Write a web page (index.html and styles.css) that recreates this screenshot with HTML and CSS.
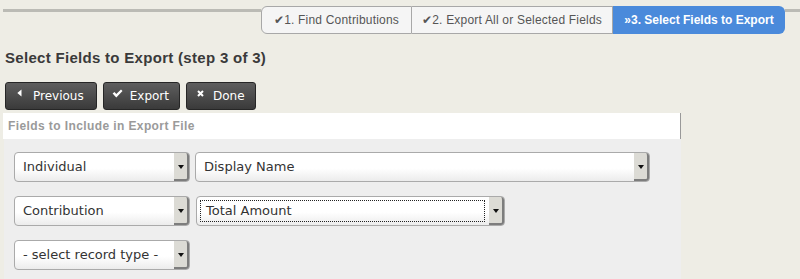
FILE: index.html
```html
<!DOCTYPE html>
<html>
<head>
<meta charset="utf-8">
<link rel="stylesheet" href="styles.css">
</head>
<body>
<div class="wizard">
  <div class="rule"></div>
  <ul class="steps">
    <li class="step step-first">✔1. Find Contributions</li>
    <li class="step step-mid">✔2. Export All or Selected Fields</li>
    <li class="step step-current">»3. Select Fields to Export</li>
  </ul>
  <div class="rule rule-end"></div>
</div>

<h3 class="title">Select Fields to Export (step 3 of 3)</h3>

<div class="buttons">
  <button class="btn btn-prev"><svg class="ico" width="5" height="8" viewBox="0 0 5 8"><path d="M4.5 0.5 L4.5 7.5 L0.3 4 Z" fill="#fff"/></svg>Previous</button>
  <button class="btn btn-export"><svg class="ico" width="11" height="9" viewBox="0 0 11 9"><path d="M0.6 4.6 L2.5 3 L4.3 5 L9 0.5 L10.5 2 L4.3 8.4 Z" fill="#fff"/></svg>Export</button>
  <button class="btn btn-done"><svg class="ico" width="7" height="7" viewBox="0 0 7 7"><path d="M1 1 L6 6 M6 1 L1 6" stroke="#fff" stroke-width="2"/></svg>Done</button>
</div>

<div class="fields">
  <div class="fields-head">Fields to Include in Export File</div>
  <div class="fields-body">
    <div class="row">
      <div class="sel w-type"><span class="sel-text">Individual</span><span class="sel-arrow"></span></div>
      <div class="sel w-name"><span class="sel-text">Display Name</span><span class="sel-arrow"></span></div>
    </div>
    <div class="row">
      <div class="sel w-type"><span class="sel-text">Contribution</span><span class="sel-arrow"></span></div>
      <div class="sel w-amount focused"><span class="sel-text">Total Amount</span><span class="sel-arrow"></span></div>
    </div>
    <div class="row">
      <div class="sel w-type"><span class="sel-text">- select record type -</span><span class="sel-arrow"></span></div>
    </div>
  </div>
</div>
</body>
</html>
```

FILE: styles.css
```css
html, body {
  margin: 0;
  padding: 0;
  background: #eeede5;
  height: 279px;
  overflow: hidden;
}
body {
  font-family: "Liberation Sans", Arial, sans-serif;
  color: #3e3e3e;
}

/* wizard steps */
.wizard {
  display: flex;
  align-items: flex-start;
  padding: 6px 0 0 3px;
  height: 28px;
}
.rule {
  flex: 1;
  height: 3px;
  margin-top: 3px;
  background: #bbbbb5;
}
.rule-end {
  flex: 0 0 15px;
}
.steps {
  display: flex;
  list-style: none;
  margin: 0;
  padding: 0;
}
.step {
  box-sizing: border-box;
  height: 28px;
  line-height: 26px;
  font-size: 12px;
  color: #555;
  background: #f5f5f5;
  border: 1px solid #a8a8a8;
  text-align: center;
  letter-spacing: 0.2px;
}
.step-first {
  width: 151px;
  border-radius: 6px 0 0 6px;
}
.step-mid {
  width: 201px;
  border-left: 0;
}
.step-current {
  width: 172px;
  border: 0;
  line-height: 28px;
  background: #4a8adb;
  color: #fff;
  font-weight: bold;
  border-radius: 0 6px 6px 0;
  letter-spacing: 0;
}

/* title */
.title {
  margin: 15px 0 0 5px;
  font-size: 15px;
  font-weight: bold;
  color: #3a3a3a;
  line-height: 18px;
  letter-spacing: 0.3px;
}

/* buttons */
.buttons {
  display: flex;
  gap: 6px;
  margin: 15px 0 0 5px;
}
.btn {
  box-sizing: border-box;
  height: 28px;
  display: flex;
  align-items: center;
  padding: 0 11px 0 10px;
  border: 1px solid #262626;
  border-radius: 3px;
  background: linear-gradient(#5e5e5e, #3a3a3a);
  color: #fff;
  font-family: "DejaVu Sans", Verdana, sans-serif;
  font-size: 12px;
}
.ico {
  position: relative;
  top: -3px;
}
.btn-prev { padding-left: 11px; padding-right: 12px; }
.btn-prev .ico { margin-right: 11px; }
.btn-export { padding-left: 8px; padding-right: 10px; }
.btn-export .ico { margin-right: 7px; }
.btn-done { padding-left: 10px; padding-right: 10px; }
.btn-done .ico { margin-right: 9px; }

/* fields block */
.fields {
  margin: 3px 0 0 3px;
  width: 678px;
}
.fields-head {
  height: 26px;
  line-height: 27px;
  background: #fff;
  border-right: 1px solid #999;
  padding-left: 5px;
  font-size: 12px;
  font-weight: bold;
  color: #9a9a9a;
  letter-spacing: 0.4px;
}
.fields-body {
  background: #eeeeee;
  margin-left: 1px;
  padding: 13px 0 20px 10px;
  display: flex;
  flex-direction: column;
  gap: 14px;
}
.row {
  display: flex;
  gap: 5px;
}
.sel {
  box-sizing: border-box;
  height: 30px;
  display: flex;
  align-items: stretch;
  border: 1px solid #aaa;
  border-radius: 4px;
  background: linear-gradient(#fff 55%, #ececec);
  font-family: "DejaVu Sans", Verdana, sans-serif;
  font-size: 13px;
  color: #333;
}
.w-type { width: 176px; }
.w-name { width: 455px; }
.w-amount { width: 309px; margin-left: 1px; }
.sel-text {
  flex: 1;
  padding-left: 8px;
  line-height: 27px;
  white-space: nowrap;
  overflow: hidden;
}
.focused .sel-text {
  margin: 3px 4px 3px 3px;
  padding-left: 5px;
  line-height: 20px;
  border: 1px dotted #222;
}
.sel-arrow {
  box-sizing: border-box;
  width: 15px;
  background: #dcdbd5;
  border-right: 2px solid #7d7d7d;
  border-bottom: 2px solid #7d7d7d;
  border-radius: 0 3px 3px 0;
  position: relative;
}
.sel-arrow::after {
  content: "";
  position: absolute;
  left: 4px;
  top: 12px;
  border-left: 3px solid transparent;
  border-right: 3px solid transparent;
  border-top: 4px solid #111;
}
```
